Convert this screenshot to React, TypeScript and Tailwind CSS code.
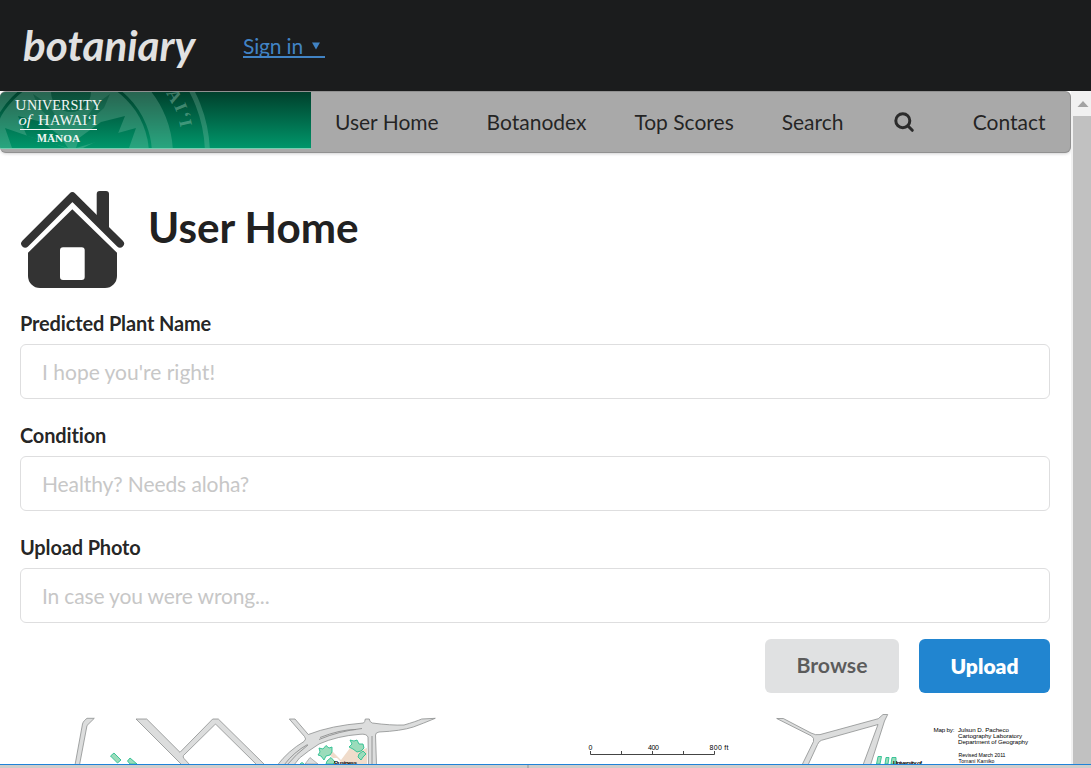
import React from "react";

const navItems = ["User Home", "Botanodex", "Top Scores", "Search"];

function Banner() {
  return (
    <svg className="block h-[57px] w-[311px] shrink-0" viewBox="0 92 311 57">
      <defs>
        <linearGradient id="green" gradientUnits="userSpaceOnUse" x1="0" y1="92" x2="0" y2="148">
          <stop offset="0" stopColor="#00402c" />
          <stop offset="1" stopColor="#00966a" />
        </linearGradient>
      </defs>
      <rect x="0" y="92" width="311" height="56" fill="url(#green)" />
      <g fill="none" stroke="#a8d8c4" strokeOpacity="0.24">
        <circle cx="70" cy="155" r="137.5" strokeWidth="5" />
        <circle cx="70" cy="155" r="92.5" strokeWidth="21" />
      </g>
      <circle cx="70" cy="155" r="79" fill="#a8d8c4" fillOpacity="0.24" />
      <g fill="url(#green)">
        <path d="M5 128L31 137 52 143 66 148H12Z" />
        <path d="M136 128L107 136 83 148H129Z" />
        <path d="M125 116L101 122 79 138 76 148 117 136Z" />
        <path d="M18 116L42 122 60 136 68 148 27 136Z" />
        <path fillOpacity="0.5" d="M110 94L96 104 82 124 84 126 104 108Z" />
        <path fillOpacity="0.5" d="M33 94L48 104 61 124 58 126 39 108Z" />
        <circle cx="71" cy="92" r="20" fillOpacity="0.7" />
      </g>
      <g fill="#a8d8c4" fillOpacity="0.4" fontFamily="Liberation Serif, serif" fontWeight="bold" fontSize="18">
        <text transform="translate(166 93) rotate(62)">A</text>
        <text transform="translate(174 106) rotate(68)">I</text>
        <text transform="translate(178 114) rotate(73)">‘</text>
        <text transform="translate(179 121) rotate(77)">I</text>
      </g>
      <g fill="#f2f7f5" fontFamily="Liberation Serif, serif">
        <text x="15" y="109.500" fontSize="15.5" textLength="11.500" lengthAdjust="spacingAndGlyphs">U</text>
        <text x="27" y="109.500" fontSize="14" textLength="75" lengthAdjust="spacingAndGlyphs">NIVERSITY</text>
        <text x="18.500" y="124.500" fontSize="14.5" fontStyle="italic" textLength="13" lengthAdjust="spacingAndGlyphs">of</text>
        <text x="38" y="124.500" fontSize="15" textLength="11.500" lengthAdjust="spacingAndGlyphs">H</text>
        <text x="50" y="124.500" fontSize="14" textLength="47" lengthAdjust="spacingAndGlyphs">AWAI‘I</text>
        <rect x="20" y="129" width="77" height="1" />
        <text x="37" y="142" fontSize="11.5" fontWeight="bold" textLength="10" lengthAdjust="spacingAndGlyphs">M</text>
        <text x="47" y="142" fontSize="10" fontWeight="bold" textLength="33" lengthAdjust="spacingAndGlyphs">ĀNOA</text>
      </g>
      <rect x="0" y="148" width="311" height="1" fill="#76ceb0" />
    </svg>
  );
}

function HomeIcon() {
  return (
    <svg className="block h-[100px] w-[106px]" viewBox="20 190 106 100">
      <path
        fill="#333"
        fillRule="evenodd"
        d="M72.3 209.3L117 252.7V276a12 12 0 0 1-12 12H40a12 12 0 0 1-12-12V252.7ZM63 247.3a3 3 0 0 0-3 3V277a3 3 0 0 0 3 3H81.7a3 3 0 0 0 3-3V250.3a3 3 0 0 0-3-3Z"
      />
      <path fill="#333" d="M96.7 219V194a3 3 0 0 1 3-3H106a3 3 0 0 1 3 3V231Z" />
      <path
        d="M25.2 243.6L72.4 196.300 120 243.6"
        fill="none"
        stroke="#333"
        strokeWidth="8"
        strokeLinecap="round"
        strokeLinejoin="round"
      />
    </svg>
  );
}

function CampusMap() {
  return (
    <svg className="block h-[53px] w-full" viewBox="0 711 1071 53" preserveAspectRatio="xMinYMin slice">
      <g fill="#dcdddd" stroke="#8d8f8f" strokeWidth="0.8">
        <path d="M75 765L82.5 724Q83 722 84.500 720.500L87 718.300H94.300L87 725.500 79.500 765" />
        <path d="M136 719H146.700L180 752.300 212.700 719H218.300L265 765H257L216.500 725Q215.700 723.500 214.500 725L183.500 755.500Q182.500 757 184 758.500L190 765H182Z" />
        <path d="M289.300 719H295L308.300 734.500Q331 725.500 363.500 723Q365 722 365.300 719H369.300Q369.500 722 372.300 723Q391 725.500 404 725Q416 721.500 421.700 719L435.300 718.300Q423 723.500 413.300 727Q401 731 379 732Q375.500 732.500 375.500 735L376.500 765H368.500L368 737Q366.500 733.500 360 734.300Q337 736 319 744Q308 751 299.500 758L294 765H277.500Q288 751 304 741.500Q307 739 304.500 736.500Z" />
        <path d="M776.700 718.500H783.300L811 733Q815.500 735.500 820 734.600L878.300 718.700 883 714.500H887.700L884.500 721 870.500 765H863L878 724.500 821.500 740.300Q819 741 817.500 744.500L808 765H802L813.500 741.500Q814.500 738 811.500 736Z" />
      </g>
      <g fill="none" stroke="#8d8f8f" strokeWidth="0.9">
        <path d="M319 739.500Q339 731 362 728.500M320 737.500Q340 729.500 356 729.500M284 765Q294 752 307.500 744.500M287 765Q296 754 308 745M372 736V765" />
      </g>
      <path d="M326 752L333 758H337L343 764H367V748L359 751 350 748 341 760 333 752Z" fill="#f0dccb" />
      <path d="M305 764L310 757.500 318 764Z" fill="#dcdddd" stroke="#8d8f8f" strokeWidth="0.6" />
      <g fill="#9bdcbb" stroke="#2abf91" strokeWidth="0.9">
        <path d="M114 753L121 760 117.500 763 110.500 756Z" />
        <path d="M130 758L137 764H130L127.500 761Z" />
        <path d="M319 748L323 749 326 745.500 329 748 332 747 332 752 330 755 326 756 324 760 321 756 318 755 320 752Z" />
        <path d="M350 740L354 741 357 740 359 744 363 744 364 748 361 751 357 752 353 749 349 747 352 744Z" />
        <path d="M359 754L363 751 366 754 363 757 361 760 358 757Z" />
        <path d="M327 761L331 757.500 335 762 333 764H326Z" />
        <path d="M300 764L302 762.500 304 764" />
        <path d="M878 756.500H881.500L880 764H876.500ZM886 757.500H889L888 764H885ZM892 757.500H896V764H891Z" />
      </g>
      <g fill="#000" fontFamily="Liberation Sans, sans-serif">
        <text x="334" y="764.600" fontSize="6" fontWeight="bold" textLength="23">Business</text>
        <text x="893" y="765.300" fontSize="6" fontWeight="bold" textLength="29">University of</text>
        <g fontSize="7">
          <text x="588.500" y="749.500">0</text>
          <text x="648" y="749.500" textLength="11">400</text>
          <text x="709.500" y="749.500" textLength="19">800 ft</text>
        </g>
        <g fontSize="6.2">
          <text x="933.500" y="731.500" textLength="21">Map by:</text>
          <text x="958" y="731.500" textLength="51">Julsun D. Pacheco</text>
          <text x="958" y="737.500" textLength="64">Cartography Laboratory</text>
          <text x="958" y="743.500" textLength="70">Department of Geography</text>
        </g>
        <g fontSize="5.2">
          <text x="958.500" y="756.500" textLength="47">Revised March 2011</text>
          <text x="958.500" y="762.700" textLength="36">Tomani Kamiko</text>
        </g>
      </g>
      <path d="M590.500 751V754.500H714.500V751M621.500 751V754M652.500 751V754M683.500 751V754" fill="none" stroke="#444" strokeWidth="1" />
    </svg>
  );
}

function Field({ label, placeholder, inputClass = "" }: { label: string; placeholder: string; inputClass?: string }) {
  return (
    <label className="mb-[21px] block h-[91px]">
      <span className="block h-[36px] text-[20px] leading-[30px] font-bold tracking-[-0.15px] text-black/87 [font-variant-ligatures:none]">
        {label}
      </span>
      <input
        className={`block h-[55px] w-full rounded-[6px] border border-[#dededf] px-[21px] text-[21px] placeholder:text-[#c7c7c7] ${inputClass}`}
        placeholder={placeholder}
      />
    </label>
  );
}

export default function App() {
  return (
    <div className="flex h-[768px] w-[1091px] flex-col overflow-hidden bg-white font-['Lato',sans-serif] text-[21px]">
      <header className="flex h-[91px] shrink-0 items-center bg-[#1b1c1d] pl-[23px]">
        <h1 className="w-[220px] pb-[2px] text-[42.2px] leading-[50px] font-bold text-[#e1e1e1] italic">botaniary</h1>
        <a href="#" className="flex h-[24px] w-[82px] items-center border-b-2 border-[#4183c4] pt-[2px] whitespace-nowrap text-[#4183c4]">
          <span className="tracking-[-0.15px]">Sign in</span>
          <svg className="ml-[9px] h-[8px] w-[8px]" viewBox="0 0 8 8">
            <path d="M0 0.500H8L4 7.500Z" fill="currentColor" />
          </svg>
        </a>
      </header>
      <div className="flex h-[673px] shrink-0">
        <main className="flex w-[1071px] flex-col overflow-hidden">
          <nav className="flex h-[62px] shrink-0 items-start overflow-hidden rounded-[6px] border border-l-0 border-[#919191] bg-[#a9a9a9] shadow-[0_1px_3px_rgba(34,36,38,0.2)]">
            <Banner />
            <div className="flex h-[60px] flex-1 items-center pl-[24px] text-black/80">
              {navItems.map((item) => (
                <a key={item} href="#" className="mr-[47.9px] whitespace-nowrap">
                  {item}
                </a>
              ))}
              <svg className="ml-[2.400px] h-[21px] w-[21px]" viewBox="0 0 21 21" fill="none" stroke="#2b2b2b" strokeWidth="3">
                <circle cx="8.800" cy="8.700" r="7" />
                <path d="M14 14L18.300 18.300" strokeLinecap="round" />
              </svg>
              <a href="#" className="mr-[24.5px] ml-auto">
                Contact
              </a>
            </div>
          </nav>
          <section className="flex h-[155px] shrink-0 px-[20px] pt-[37px]">
            <HomeIcon />
            <h2 className="mt-[11px] ml-[22px] text-[42.2px] leading-[52px] font-bold text-[#212121]">User Home</h2>
          </section>
          <form className="h-[403px] shrink-0 px-[20px] pr-[21px]">
            <Field label="Predicted Plant Name" placeholder="I hope you're right!" />
            <Field label="Condition" placeholder="Healthy? Needs aloha?" inputClass="tracking-[-0.1px]" />
            <Field label="Upload Photo" placeholder="In case you were wrong..." inputClass="tracking-[-0.15px]" />
            <div className="-mt-[5px] flex justify-end gap-[20px]">
              <button type="button" className="h-[54px] w-[134px] rounded-[6px] bg-[#e0e1e2] text-[21.3px] font-bold text-black/60">
                Browse
              </button>
              <button type="button" className="h-[54px] w-[131px] rounded-[6px] bg-[#2185d0] text-[21px] font-extrabold text-white">
                Upload
              </button>
            </div>
          </form>
          <CampusMap />
        </main>
        <div className="flex w-[20px] shrink-0 flex-col items-end bg-[#f1f1f1]">
          <svg className="h-[25px] w-[18px]" viewBox="0 0 18 25">
            <path d="M4.500 16L10 10L15.500 16Z" fill="#a3a3a3" />
          </svg>
          <div className="w-[18px] flex-1 bg-[#c1c1c1]" />
        </div>
      </div>
      <footer className="flex h-[4px] shrink-0 justify-center border-t border-[#1f82d8] bg-[#cfcdcb]">
        <div className="mr-[36px] w-[2px] bg-[#b0b0b0]" />
      </footer>
    </div>
  );
}
